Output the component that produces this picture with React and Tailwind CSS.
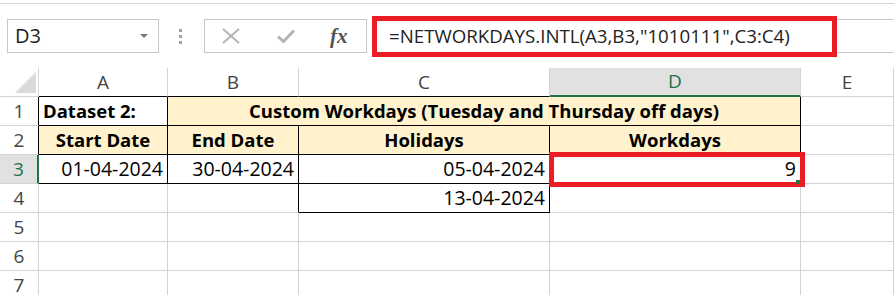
import React from 'react'

const font = { fontFamily: '"Open Sans", "Liberation Sans", sans-serif' }

const Cell = ({ className = '', b, children }) => (
    <div className={'h-[29px] flex items-center px-[4px] text-black whitespace-nowrap overflow-visible border-r border-b ' + (b ? 'font-bold text-[18.5px] ' : 'text-[19.5px] ') + className}>
        {children}
    </div>
)

const RowHead = ({ n, className = 'border-[#d4d4d4] text-[#444]' }) => (
    <div className={'h-[29px] flex items-center justify-center text-[19px] border-r border-b ' + className}>{n}</div>
)

const ColHead = ({ l, className = 'border-[#d4d4d4] text-[#444]' }) => (
    <div className={'h-[29px] flex items-center justify-center text-[19px] border-r border-b ' + className}>{l}</div>
)

const App = () => {
    return (
        <div className='w-[894px] h-[295px] overflow-hidden bg-white' style={font}>
            {/* formula bar */}
            <div className='h-[4px] border-b border-[#d4d4d4]'></div>
            <div className='mt-[15px] h-[34px] flex items-center'>
                <div className='ml-[7px] w-[152px] h-[34px] border border-[#c6c6c6] flex items-center justify-between pl-[7px] pr-[10px] text-[20px] text-[#222]'>
                    <span>D3</span>
                    <svg width="8" height="4" viewBox="0 0 8 4"><path d="M0 0h8L4 4z" fill="#777" /></svg>
                </div>
                <div className='ml-[20px] flex flex-col gap-[3px]'>
                    <div className='w-[3px] h-[3px] bg-[#a0a0a0]'></div>
                    <div className='w-[3px] h-[3px] bg-[#a0a0a0]'></div>
                    <div className='w-[3px] h-[3px] bg-[#a0a0a0]'></div>
                </div>
                <div className='ml-[22px] w-[163px] h-[34px] border border-[#c6c6c6] flex items-center pl-[17px]'>
                    <svg width="18" height="16" viewBox="0 0 18 16"><path d="M1 1L17 15M17 1L1 15" stroke="#b4b4b4" strokeWidth="2" fill="none" /></svg>
                    <svg className='ml-[37px]' width="18" height="14" viewBox="0 0 18 14"><path d="M1 7.5L6.5 12.5L17 1.5" stroke="#b4b4b4" strokeWidth="3" fill="none" /></svg>
                    <span className='ml-[35px] text-[21px] italic font-bold text-[#555] leading-none' style={{ fontFamily: '"Liberation Serif", serif' }}>fx</span>
                </div>
                <div className='ml-[5px] flex-1 h-[34px] border-y border-[#c6c6c6] relative flex items-center'>
                    <div className='absolute left-0 top-[-4px] w-[465px] h-[41px] border-[5px] border-[#ec1c24]'></div>
                    <span className='pl-[17px] text-[18.7px] text-[#222] whitespace-nowrap'>=NETWORKDAYS.INTL(A3,B3,"1010111",C3:C4)</span>
                </div>
            </div>

            {/* sheet */}
            <div className='mt-[15px] grid grid-cols-[39px_129px_131px_251px_251px_1fr]'>
                <div className='h-[29px] border-r border-b border-[#d4d4d4] relative'>
                    <svg className='absolute left-[15px] top-[4px]' width="21" height="21" viewBox="0 0 21 21"><path d="M21 0V21H0z" fill="#dadada" /></svg>
                </div>
                <ColHead l='A' className='border-r-[#d4d4d4] border-b-black text-[#444]' />
                <ColHead l='B' className='border-r-[#d4d4d4] border-b-black text-[#444]' />
                <ColHead l='C' className='border-r-[#d4d4d4] border-b-black text-[#444]' />
                <ColHead l='D' className='bg-[#e1e1e1] border-r-[#d4d4d4] border-b-2 border-b-[#217346] text-[#217346]' />
                <ColHead l='E' />

                {/* row 1 */}
                <RowHead n='1' className='border-r-black border-b-[#d4d4d4] text-[#444]' />
                <Cell b className='border-black'>Dataset 2:</Cell>
                <Cell b className='col-span-3 justify-center border-black bg-[#fff2cc]'>Custom Workdays (Tuesday and Thursday off days)</Cell>
                <Cell className='border-[#d4d4d4]'></Cell>

                {/* row 2 */}
                <RowHead n='2' className='border-r-black border-b-[#d4d4d4] text-[#444]' />
                <Cell b className='justify-center border-black bg-[#fff2cc]'>Start Date</Cell>
                <Cell b className='justify-center border-black bg-[#fff2cc]'>End Date</Cell>
                <Cell b className='justify-center border-black bg-[#fff2cc]'>Holidays</Cell>
                <Cell b className='justify-center border-black bg-[#fff2cc]'>Workdays</Cell>
                <Cell className='border-[#d4d4d4]'></Cell>

                {/* row 3 */}
                <RowHead n='3' className='bg-[#e1e1e1] border-r-2 border-r-[#217346] border-b-[#d4d4d4] text-[#217346]' />
                <Cell className='justify-end border-black'>01-04-2024</Cell>
                <Cell className='justify-end border-black'>30-04-2024</Cell>
                <Cell className='justify-end border-black'>05-04-2024</Cell>
                <Cell className='justify-end border-black relative'>
                    9
                    <div className='absolute left-[-1px] top-[-3px] w-[256px] h-[35px] border-[5px] border-[#ec1c24]'></div>
                    <div className='absolute right-[0px] bottom-[-1px] w-[4px] h-[4px] bg-[#217346]'></div>
                </Cell>
                <Cell className='border-[#d4d4d4]'></Cell>

                {/* row 4 */}
                <RowHead n='4' />
                <Cell className='border-[#d4d4d4]'></Cell>
                <Cell className='border-r-black border-b-[#d4d4d4]'></Cell>
                <Cell className='justify-end border-black'>13-04-2024</Cell>
                <Cell className='border-[#d4d4d4]'></Cell>
                <Cell className='border-[#d4d4d4]'></Cell>

                {['5', '6', '7'].map(n => (
                    <React.Fragment key={n}>
                        <RowHead n={n} />
                        <Cell className='border-[#d4d4d4]'></Cell>
                        <Cell className='border-[#d4d4d4]'></Cell>
                        <Cell className='border-[#d4d4d4]'></Cell>
                        <Cell className='border-[#d4d4d4]'></Cell>
                        <Cell className='border-[#d4d4d4]'></Cell>
                    </React.Fragment>
                ))}
            </div>
        </div>
    )
}

export default App
